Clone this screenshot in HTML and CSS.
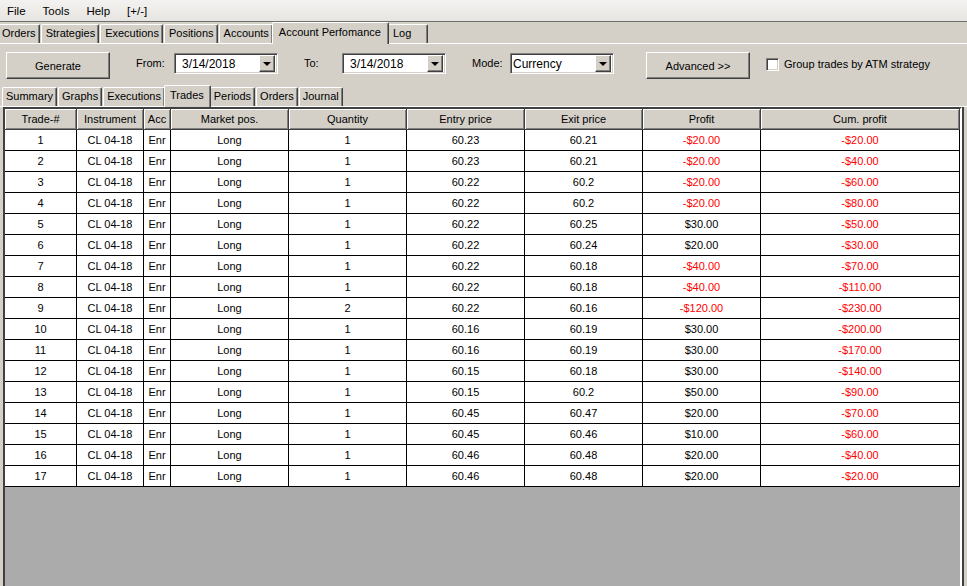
FILE: index.html
```html
<!DOCTYPE html>
<html lang="en">
<head>
  <meta charset="UTF-8" />
  <title>Account Performance</title>
  <link rel="stylesheet" href="styles.css">
</head>
<body>
  <div class="menubar">
    <span>File</span>
    <span>Tools</span>
    <span>Help</span>
    <span>[+/-]</span>
  </div>

  <div class="tabstrip top">
    <div class="tab first">Orders</div>
    <div class="tab">Strategies</div>
    <div class="tab">Executions</div>
    <div class="tab">Positions</div>
    <div class="tab">Accounts</div>
    <div class="tab active">Account Perfomance</div>
    <div class="tab log">Log</div>
  </div>

  <div class="panel">
    <div class="toolbar">
      <button class="btn">Generate</button>
      <label class="field-label">From:</label>
      <div class="combo"><span class="combo-text">3/14/2018</span><span class="combo-btn"></span></div>
      <label class="field-label">To:</label>
      <div class="combo"><span class="combo-text">3/14/2018</span><span class="combo-btn"></span></div>
      <label class="field-label">Mode:</label>
      <div class="combo edit"><span class="combo-text">Currency</span><span class="combo-btn"></span></div>
      <button class="btn advanced">Advanced &gt;&gt;</button>
      <div class="check">
        <span class="checkbox"></span>
        <span>Group trades by ATM strategy</span>
      </div>
    </div>

    <div class="tabstrip inner">
      <div class="tab">Summary</div>
      <div class="tab">Graphs</div>
      <div class="tab">Executions</div>
      <div class="tab active">Trades</div>
      <div class="tab">Periods</div>
      <div class="tab">Orders</div>
      <div class="tab">Journal</div>
    </div>

    <div class="subpanel">
      <div class="grid-frame">
        <table class="grid">
          <colgroup>
            <col class="c-num"><col class="c-inst"><col class="c-acc"><col class="c-mid">
            <col class="c-mid"><col class="c-mid"><col class="c-mid"><col class="c-mid"><col class="c-cum">
          </colgroup>
          <thead>
            <tr>
              <th>Trade-#</th><th>Instrument</th><th>Acc</th><th>Market pos.</th><th>Quantity</th>
              <th>Entry price</th><th>Exit price</th><th>Profit</th><th>Cum. profit</th>
            </tr>
          </thead>
          <tbody>
            <tr><td>1</td><td>CL 04-18</td><td>Enr</td><td>Long</td><td>1</td><td>60.23</td><td>60.21</td><td class="neg">-$20.00</td><td class="neg">-$20.00</td></tr>
            <tr><td>2</td><td>CL 04-18</td><td>Enr</td><td>Long</td><td>1</td><td>60.23</td><td>60.21</td><td class="neg">-$20.00</td><td class="neg">-$40.00</td></tr>
            <tr><td>3</td><td>CL 04-18</td><td>Enr</td><td>Long</td><td>1</td><td>60.22</td><td>60.2</td><td class="neg">-$20.00</td><td class="neg">-$60.00</td></tr>
            <tr><td>4</td><td>CL 04-18</td><td>Enr</td><td>Long</td><td>1</td><td>60.22</td><td>60.2</td><td class="neg">-$20.00</td><td class="neg">-$80.00</td></tr>
            <tr><td>5</td><td>CL 04-18</td><td>Enr</td><td>Long</td><td>1</td><td>60.22</td><td>60.25</td><td>$30.00</td><td class="neg">-$50.00</td></tr>
            <tr><td>6</td><td>CL 04-18</td><td>Enr</td><td>Long</td><td>1</td><td>60.22</td><td>60.24</td><td>$20.00</td><td class="neg">-$30.00</td></tr>
            <tr><td>7</td><td>CL 04-18</td><td>Enr</td><td>Long</td><td>1</td><td>60.22</td><td>60.18</td><td class="neg">-$40.00</td><td class="neg">-$70.00</td></tr>
            <tr><td>8</td><td>CL 04-18</td><td>Enr</td><td>Long</td><td>1</td><td>60.22</td><td>60.18</td><td class="neg">-$40.00</td><td class="neg">-$110.00</td></tr>
            <tr><td>9</td><td>CL 04-18</td><td>Enr</td><td>Long</td><td>2</td><td>60.22</td><td>60.16</td><td class="neg">-$120.00</td><td class="neg">-$230.00</td></tr>
            <tr><td>10</td><td>CL 04-18</td><td>Enr</td><td>Long</td><td>1</td><td>60.16</td><td>60.19</td><td>$30.00</td><td class="neg">-$200.00</td></tr>
            <tr><td>11</td><td>CL 04-18</td><td>Enr</td><td>Long</td><td>1</td><td>60.16</td><td>60.19</td><td>$30.00</td><td class="neg">-$170.00</td></tr>
            <tr><td>12</td><td>CL 04-18</td><td>Enr</td><td>Long</td><td>1</td><td>60.15</td><td>60.18</td><td>$30.00</td><td class="neg">-$140.00</td></tr>
            <tr><td>13</td><td>CL 04-18</td><td>Enr</td><td>Long</td><td>1</td><td>60.15</td><td>60.2</td><td>$50.00</td><td class="neg">-$90.00</td></tr>
            <tr><td>14</td><td>CL 04-18</td><td>Enr</td><td>Long</td><td>1</td><td>60.45</td><td>60.47</td><td>$20.00</td><td class="neg">-$70.00</td></tr>
            <tr><td>15</td><td>CL 04-18</td><td>Enr</td><td>Long</td><td>1</td><td>60.45</td><td>60.46</td><td>$10.00</td><td class="neg">-$60.00</td></tr>
            <tr><td>16</td><td>CL 04-18</td><td>Enr</td><td>Long</td><td>1</td><td>60.46</td><td>60.48</td><td>$20.00</td><td class="neg">-$40.00</td></tr>
            <tr><td>17</td><td>CL 04-18</td><td>Enr</td><td>Long</td><td>1</td><td>60.46</td><td>60.48</td><td>$20.00</td><td class="neg">-$20.00</td></tr>
          </tbody>
        </table>
      </div>
    </div>
  </div>
</body>
</html>
```

FILE: styles.css
```css
* {
  box-sizing: border-box;
}
html, body {
  margin: 0;
  height: 100%;
}
body {
  font-family: "Liberation Sans", Arial, sans-serif;
  font-size: 11px;
  color: #000;
  background: #d4d0c8;
  display: flex;
  flex-direction: column;
  height: 586px;
  overflow: hidden;
}

/* Menu */
.menubar {
  height: 22px;
  display: flex;
  align-items: center;
  gap: 17px;
  padding-left: 7px;
  background: linear-gradient(#f3f2f0, #e7e5e1);
  border-bottom: 1px solid #6e6e6e;
  font-size: 11.5px;
}

/* Tabs */
.tabstrip {
  display: flex;
  align-items: flex-end;
  height: 21px;
  flex-shrink: 0;
}
.tab {
  height: 19px;
  line-height: 17px;
  padding: 0 3px 0 4px;
  margin-right: 1px;
  white-space: nowrap;
  border: 1px solid #fff;
  border-right-color: #404040;
  border-bottom: none;
  border-radius: 2px 2px 0 0;
  box-shadow: inset -1px 0 #808080;
}
.tabstrip.top .tab.first {
  margin-left: -3px;
}
.tab.active {
  height: 22px;
  line-height: 18px;
  margin: 0 -1px -1px -2px;
  padding: 0 7px 0 6px;
  background: #d4d0c8;
  position: relative;
  z-index: 1;
}
.tab.log {
  min-width: 40px;
}
.tabstrip.inner {
  padding-left: 2px;
}
.tabstrip.inner .tab {
  padding: 0 3px;
}
.tabstrip.inner .tab.active {
  padding: 0 6px 0 5px;
}

/* Panels */
.panel {
  flex: 1;
  display: flex;
  flex-direction: column;
  border-top: 1px solid #fff;
  min-height: 0;
}
.subpanel {
  flex: 1;
  display: flex;
  flex-direction: column;
  border-top: 1px solid #fff;
  min-height: 0;
}

/* Toolbar */
.toolbar {
  display: flex;
  align-items: flex-start;
  padding: 8px 0 0 6px;
  height: 41px;
  flex-shrink: 0;
}
.btn {
  font: inherit;
  color: #000;
  width: 104px;
  height: 27px;
  padding: 0;
  background: #d4d0c8;
  border: 1px solid;
  border-color: #fff #404040 #404040 #fff;
  box-shadow: inset -1px -1px #808080;
}
.btn.advanced {
  margin-left: 32px;
}
.field-label {
  width: 38px;
  margin: 1px 0 0 26px;
  line-height: 20px;
}
.combo {
  width: 104px;
  height: 21px;
  margin-top: 1px;
  display: flex;
  align-items: center;
  background: #fff;
  border: 1px solid;
  border-color: #808080 #fff #fff #808080;
  box-shadow: inset 1px 1px #404040, inset -1px -1px #d4d0c8;
  padding: 2px 2px 2px 7px;
}
.combo.edit {
  padding-left: 2px;
}
.combo-text {
  flex: 1;
  font-size: 12px;
}
.combo-btn {
  width: 16px;
  height: 17px;
  background: #d4d0c8;
  border: 1px solid;
  border-color: #fff #404040 #404040 #fff;
  box-shadow: inset -1px -1px #808080;
  display: flex;
  align-items: center;
  justify-content: center;
}
.combo-btn::after {
  content: "";
  border-left: 4px solid transparent;
  border-right: 4px solid transparent;
  border-top: 4px solid #000;
}
.check {
  display: flex;
  align-items: center;
  gap: 5px;
  margin: 5px 0 0 16px;
  height: 14px;
}
.checkbox {
  width: 13px;
  height: 13px;
  background: #fff;
  border: 1px solid;
  border-color: #808080 #fff #fff #808080;
  box-shadow: inset 1px 1px #404040, inset -1px -1px #d4d0c8;
}

/* Grid */
.grid-frame {
  flex: 1;
  margin: 0 5px 0 3px;
  background: #ababab;
  border-top: 2px solid #404040;
  border-left: 2px solid #404040;
  border-right: 2px solid #fff;
  box-shadow: 2px 0 0 #404040;
  overflow: hidden;
}
.grid {
  table-layout: fixed;
  border-collapse: separate;
  border-spacing: 0;
  width: 955px;
  background: #fff;
}
.c-num { width: 72px; }
.c-inst { width: 67px; }
.c-acc { width: 27px; }
.c-mid { width: 118px; }
.c-cum { width: 199px; }
.grid th {
  height: 21px;
  padding: 0;
  font-weight: normal;
  text-align: center;
  background: #d4d0c8;
  border-right: 1px solid #404040;
  border-bottom: 1px solid #404040;
  box-shadow: inset 1px 1px #fff, inset -1px -1px #808080;
  white-space: nowrap;
  overflow: hidden;
}
.grid td {
  height: 21px;
  padding: 0;
  text-align: center;
  border-right: 1px solid #000;
  border-bottom: 1px solid #000;
  white-space: nowrap;
  overflow: hidden;
}
.grid td.neg {
  color: #f00;
}
```
